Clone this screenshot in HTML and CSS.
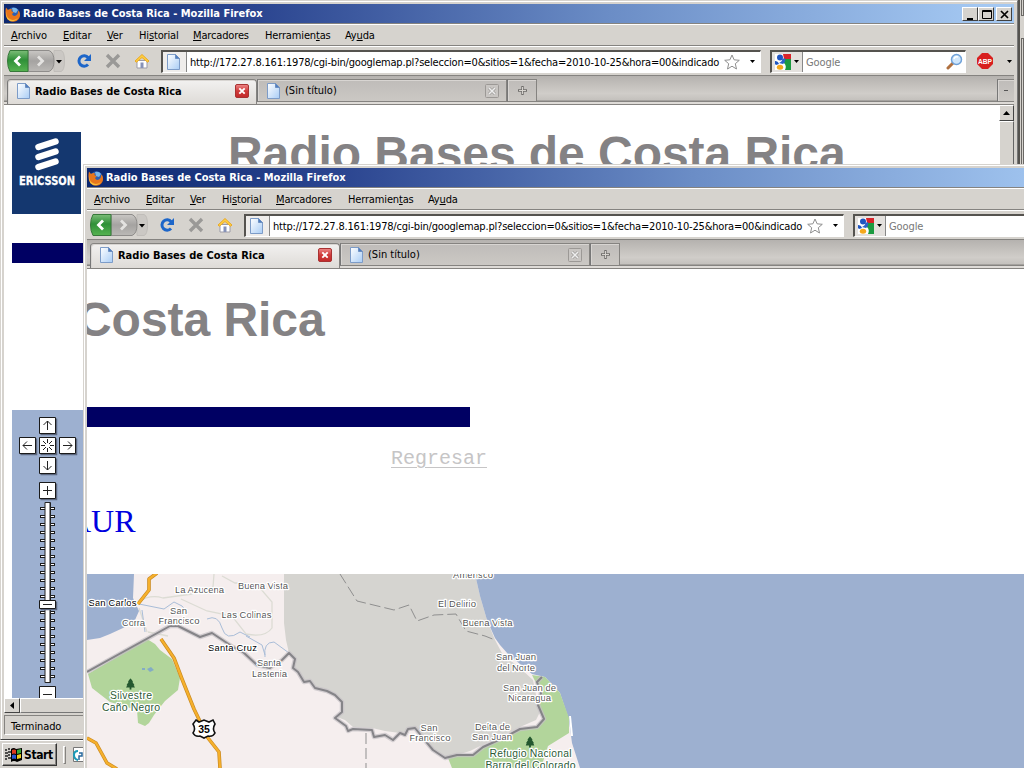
FILE: index.html
```html
<!DOCTYPE html>
<html lang="es">
<head>
<meta charset="utf-8">
<title>Radio Bases de Costa Rica</title>
<link rel="stylesheet" href="styles.css">
</head>
<body>
<svg class="defs" width="0" height="0">
  <defs>
    <linearGradient id="pg" x1="0" y1="0" x2="1" y2="1"><stop offset="0" stop-color="#fff"/><stop offset="1" stop-color="#a9cdf6"/></linearGradient>
    <linearGradient id="gr" x1="0" y1="0" x2="0" y2="1"><stop offset="0" stop-color="#7cbd78"/><stop offset=".45" stop-color="#2f9038"/><stop offset="1" stop-color="#56b350"/></linearGradient>
    <linearGradient id="gy" x1="0" y1="0" x2="0" y2="1"><stop offset="0" stop-color="#c9c7c4"/><stop offset=".5" stop-color="#a5a3a1"/><stop offset="1" stop-color="#bbb9b6"/></linearGradient>
    <linearGradient id="rd" x1="0" y1="0" x2="0" y2="1"><stop offset="0" stop-color="#e88"/><stop offset=".5" stop-color="#cf3a3a"/><stop offset="1" stop-color="#c22a2a"/></linearGradient>
  </defs>
  <symbol id="fox" viewBox="0 0 16 16">
    <circle cx="8.4" cy="7.6" r="6.3" fill="#2c5fb4"/><path d="M7 2q4-1 6 2l-2 3-3-1z" fill="#79b6ea"/>
    <path d="M1 1.5 3 4q2-1.600 4-.8L6.300 5l2.500 1.200L7 8q1 2.600 4 1.600 2.500-1.200 2-5l1.500 1.200Q16.500 12 11.500 15 6 17 2.300 13 -.5 9 1 1.500z" fill="#e8761c"/>
    <path d="M1.500 4Q.5 10 4 12.500q4 3 9-.5-3 4-7.500 3.200Q-.5 13 1.500 4z" fill="#f9bd3a"/>
  </symbol>
  <symbol id="page" viewBox="0 0 13 16"><path d="M.5.5h8l4 4v11H.5z" fill="url(#pg)" stroke="#7d9cc8"/><path d="M8.500.5v4h4z" fill="#4f7fc4" stroke="#6d8fc0"/></symbol>
  <symbol id="nav" viewBox="0 0 60 24">
    <path d="M48 1.500h7q3.500 1 3.500 10.500T55 22.500h-7z" fill="#cbc8c4" stroke="#c0bdb9"/>
    <path d="M22 1.500h21q5 2 5 10.500t-5 10.500H22z" fill="url(#gy)" stroke="#8f8d8b"/>
    <path d="M4 1.500h18v21H4Q1.500 18 1.500 12T4 1.500z" fill="url(#gr)" stroke="#37783a"/>
    <path d="m14 7.500-4.500 4.500 4.500 4.500" fill="none" stroke="#fff" stroke-width="2.800"/>
    <path d="m32 7.500 4.500 4.500-4.500 4.500" fill="none" stroke="#e4e3e1" stroke-width="2.800"/>
    <path d="M50 11h6l-3 3.500z" fill="#000"/>
  </symbol>
  <symbol id="reload" viewBox="0 0 16 16"><path d="M12 11.500a5.200 5.200 0 1 1 .2-6.800" fill="none" stroke="#1d66c9" stroke-width="3"/><path d="M15 1v7H8z" fill="#1d66c9"/></symbol>
  <symbol id="stop" viewBox="0 0 16 16"><path d="m2 2 12 12M14 2 2 14" stroke="#9a9997" stroke-width="3.400"/></symbol>
  <symbol id="home" viewBox="0 0 16 16"><path d="M3 7.500h10V15H3z" fill="#fff" stroke="#9b9ba8"/><path d="M6.500 9.500h3V15h-3z" fill="#8692b8"/><path d="M8 1.500 1 8l1.300 1.300L8 4.500l5.700 4.800L15 8z" fill="#ffcf3d" stroke="#e9a92b"/></symbol>
  <symbol id="star" viewBox="0 0 16 16"><path d="m8 1 2.100 4.800 5.200.5-4 3.400 1.200 5.300L8 12.200 3.500 15l1.200-5.300-4-3.400 5.200-.5z" fill="#fff" stroke="#8f8f8f"/></symbol>
  <symbol id="car" viewBox="0 0 5 3"><path d="M0 0h5L2.500 3z" fill="#000"/></symbol>
  <symbol id="goog" viewBox="0 0 16 16"><path d="M0 0h16v16H0z" fill="#fff"/><path d="M8 0h8v5H9z" fill="#d8232a"/><path d="M9 5h7v11h-6q2-4-1-7z" fill="#1c9a40"/><circle cx="5" cy="3.500" r="3" fill="#1f55c0"/><path d="M0 7q3 0 4 3l-3 1-1-1z" fill="#1f55c0"/><path d="M4 9q4-2 3-4l3-1q1 4-2 6z" fill="#2a62c8"/><ellipse cx="5" cy="13.300" rx="3.200" ry="2.500" fill="#f5a81c"/></symbol>
  <symbol id="lens" viewBox="0 0 17 17"><path d="m2 15 5-5" stroke="#b0703f" stroke-width="3" stroke-linecap="round"/><circle cx="10.500" cy="6.500" r="5" fill="#cfe6fb" stroke="#6fa1d8" stroke-width="1.500"/><path d="M8 6q1-3 4-2" fill="none" stroke="#fff" stroke-width="1.500"/></symbol>
  <symbol id="cls" viewBox="0 0 14 14"><rect x=".5" y=".5" width="13" height="13" rx="1.500" fill="url(#rd)" stroke="#a83232"/><path d="m4.300 4.300 5.400 5.400M9.700 4.300 4.300 9.700" stroke="#fff" stroke-width="1.900"/></symbol>
  <symbol id="clsg" viewBox="0 0 14 14"><rect x=".5" y=".5" width="13" height="13" rx="1" fill="#c9c6c3" stroke="#9c9996"/><path d="m4 4 6 6M10 4l-6 6" stroke="#a09e9b" stroke-width="3"/><path d="m4 4 6 6M10 4l-6 6" stroke="#eee" stroke-width="1.500"/></symbol>
  <symbol id="plus" viewBox="0 0 9 9"><path d="M4.500 0v9M0 4.500h9" stroke="#6f6d6b" stroke-width="2.400"/><path d="M4.500 1v7M1 4.500h7" stroke="#d6d3ce"/></symbol>
  <symbol id="tree" viewBox="0 0 10 13"><path d="M5 0 8 4H7l2.500 4h-1L10 10.500H6V13H4v-2.500H0L1.500 8h-1L3 4H2z" fill="#24582f"/></symbol>
</svg>

<div class="desktop">
  <div class="edge"><i></i><i></i></div>

  <section class="win back">
    <header class="title"><svg class="fox"><use href="#fox"/></svg><b>Radio Bases de Costa Rica - Mozilla Firefox</b>
      <span class="caps">
        <svg width="16" height="14"><path d="M4 10h6v2H4z"/></svg><svg width="16" height="14"><path d="M3.500 2.500h9v8h-9zM3 3.500h10" fill="none" stroke="#000"/></svg><svg class="x" width="16" height="14"><path d="m4 3 7 7m0-7-7 7" stroke="#000" stroke-width="1.700"/></svg>
      </span>
    </header>
    <nav class="menu"><span class="m1"><u>A</u>rchivo</span><span class="m2"><u>E</u>ditar</span><span class="m3"><u>V</u>er</span><span class="m4">Hi<u>s</u>torial</span><span class="m5"><u>M</u>arcadores</span><span class="m6">Herramien<u>t</u>as</span><span class="m7">Ay<u>u</u>da</span></nav>
    <div class="tools">
      <svg class="nav"><use href="#nav"/></svg><svg class="ic reload"><use href="#reload"/></svg><svg class="ic stop"><use href="#stop"/></svg><svg class="ic home"><use href="#home"/></svg>
      <div class="url"><span class="fav"><svg class="page"><use href="#page"/></svg></span><span class="addr">http://172.27.8.161:1978/cgi-bin/googlemap.pl?seleccion=0&amp;sitios=1&amp;fecha=2010-10-25&amp;hora=00&amp;indicado</span><svg class="star"><use href="#star"/></svg><svg class="car"><use href="#car"/></svg></div>
      <div class="search"><span class="eng"><svg class="ic"><use href="#goog"/></svg><svg class="car"><use href="#car"/></svg></span><span class="hint">Google</span><svg class="lens"><use href="#lens"/></svg></div>
      <svg class="abp" viewBox="0 0 16 16"><path d="M5 0h6l5 5v6l-5 5H5l-5-5V5z" fill="#d8201f"/><text x="8" y="10.800" textLength="14" lengthAdjust="spacingAndGlyphs">ABP</text></svg><svg class="car end"><use href="#car"/></svg>
    </div>
    <div class="tabs">
      <div class="tab on"><svg class="page"><use href="#page"/></svg><b>Radio Bases de Costa Rica</b><svg class="cls"><use href="#cls"/></svg></div>
      <div class="tab"><svg class="page"><use href="#page"/></svg><span>(Sin título)</span><svg class="cls"><use href="#clsg"/></svg></div>
      <div class="tab new"><svg><use href="#plus"/></svg></div>
      <div class="tab all"><i></i></div>
    </div>
    <div class="view">
      <div class="doc">
        <div class="masthead">
          <svg class="logo" viewBox="0 0 69 82"><path d="M0 0h69v82H0z" fill="#14376f"/><g stroke="#fff" stroke-width="6.500" stroke-linecap="round"><path d="m26.500 15 17-5.500M26.500 25l17-5.500M26.500 35l17-5.500"/></g><text x="7" y="53" textLength="56" lengthAdjust="spacingAndGlyphs">ERICSSON</text></svg>
          <h1>Radio Bases de Costa Rica</h1>
        </div>
        <div class="bar"></div>
        <svg class="zoomer" viewBox="0 0 90 288">
          <path d="M35.500 97v174" stroke="#1d1d1d" stroke-width="15" stroke-dasharray="3 5"/><path d="M35.500 98v173" stroke="#fff" stroke-width="13" stroke-dasharray="1 7"/>
          <rect x="32.500" y="92" width="6.500" height="181" fill="#222" rx="1"/><rect x="33.500" y="93" width="4" height="179" fill="#fff"/>
          <path d="M28.500 24.500h16v-16M8.500 44.500h16v-16M28.500 44.500h16v-16M48.500 44.500h16v-16M28.500 64.500h16v-16M28.500 89.500h16v-16M28.500 199.500h16v-8" fill="none" stroke="#5d6880" stroke-width="1.500"/>
          <g fill="#fff" stroke="#1a1a1a"><path d="M27.500 7.500h16v16h-16zM7.500 27.500h16v16h-16zM27.500 27.500h16v16h-16zM47.500 27.500h16v16h-16zM27.500 47.500h16v16h-16zM27.500 72.500h16v16h-16zM27.500 190.500h16v8h-16zM27.500 276.500h16v16h-16z"/></g>
          <g fill="none" stroke="#222"><path d="M35.500 20v-9m-4 4 4-4 4 4M20 35.500h-9m4-4-4 4 4 4M51 35.500h9m-4-4 4 4-4 4M35.500 51v9m-4-4 4 4 4-4M35.500 76v9M31 80.500h9M31 194.500h9M31 284.500h9M35.500 29v4M35.500 38v4M29 35.500h4M38 35.500h4M31 31l3 3M40 31l-3 3M31 40l3-3M40 40l-3-3"/></g>
        </svg>
      </div>
      <div class="vscroll"><i><svg width="7" height="4"><path d="M0 4h7L3.500 0z"/></svg></i></div>
    </div>
    <div class="hscroll"><i><svg width="4" height="7"><path d="M4 0v7L0 3.500z"/></svg></i><b></b></div>
    <footer class="status">Terminado</footer>
  </section>

  <div class="taskbar">
    <div class="start"><svg width="18" height="15" viewBox="0 0 18 15"><path d="M0 3h2M0 6h3M0 9h3M0 12h2M3 2h2M3 5h3M3 8h2M3 11h3" stroke="#222" stroke-width="1.500"/><path d="M6 2q3-2 5 0l6-1v12l-5 2q-3-2-6 0z"/><path d="M7 3q2-1 4 0v4Q9 6 7 7z" fill="#e03a20"/><path d="M12 3l4-1v4l-4 1z" fill="#3aa83a"/><path d="M7 8q2-1 4 0v4q-2-1-4 0z" fill="#2b55d0"/><path d="M12 8l4-1v4l-4 1z" fill="#f0cc20"/></svg><b>Start</b></div>
    <i class="grip"></i><svg class="quick" width="13" height="15" viewBox="0 0 13 15"><path d="M1.500.5h11v14h-11z" fill="#fff" stroke="#777"/><path d="M1 8q0-5 5-5v2Q3 5 3 8t3 4v2Q1 13 1 8z" fill="#1b9bb8"/><path d="M7 6h3v3H7v4" fill="none" stroke="#27689c" stroke-width="1.500"/></svg>
  </div>

  <section class="win front">
    <header class="title"><svg class="fox"><use href="#fox"/></svg><b>Radio Bases de Costa Rica - Mozilla Firefox</b></header>
    <nav class="menu"><span class="m1"><u>A</u>rchivo</span><span class="m2"><u>E</u>ditar</span><span class="m3"><u>V</u>er</span><span class="m4">Hi<u>s</u>torial</span><span class="m5"><u>M</u>arcadores</span><span class="m6">Herramien<u>t</u>as</span><span class="m7">Ay<u>u</u>da</span></nav>
    <div class="tools">
      <svg class="nav"><use href="#nav"/></svg><svg class="ic reload"><use href="#reload"/></svg><svg class="ic stop"><use href="#stop"/></svg><svg class="ic home"><use href="#home"/></svg>
      <div class="url"><span class="fav"><svg class="page"><use href="#page"/></svg></span><span class="addr">http://172.27.8.161:1978/cgi-bin/googlemap.pl?seleccion=0&amp;sitios=1&amp;fecha=2010-10-25&amp;hora=00&amp;indicado</span><svg class="star"><use href="#star"/></svg><svg class="car"><use href="#car"/></svg></div>
      <div class="search"><span class="eng"><svg class="ic"><use href="#goog"/></svg><svg class="car"><use href="#car"/></svg></span><span class="hint">Google</span></div>
    </div>
    <div class="tabs">
      <div class="tab on"><svg class="page"><use href="#page"/></svg><b>Radio Bases de Costa Rica</b><svg class="cls"><use href="#cls"/></svg></div>
      <div class="tab"><svg class="page"><use href="#page"/></svg><span>(Sin título)</span><svg class="cls"><use href="#clsg"/></svg></div>
      <div class="tab new"><svg><use href="#plus"/></svg></div>
    </div>
    <div class="view">
      <div class="doc scrolled">
        <h1>Costa Rica</h1>
        <div class="bar"></div>
        <a class="regresar">Regresar</a>
        <div class="tech">AUR</div>
        <svg class="map" viewBox="87 574 937 194">
          <path d="M87 574h937v194H87z" fill="#f5eeee"/>
          <path d="M87 574h47l-1 24 6 13-4 9-12 8-13 6-10 4-13 2z" fill="#9db0d0"/>
          <path d="M284 574H475L480 596 487 620 495 640 503 655 520 668 533 680 537 700 540 712 536 720 520 727 503 735 470 751 457 755 445 758 433 750 423 738 415 728 408 729 405 735 400 733 385 731 372 728 353 727 345 720 337 717 342 712 342 702 335 695 327 691 315 688 310 681 304 682 298 672 293 668 295 659 289 653 286 640 284 623z" fill="#d5d4d0"/>
          <path d="M475 574H1024V768H580L572 743 569 720 560 693 545 677 532 674 520 664 508 654 500 645 495 638 487 620 480 596z" fill="#9db0d0"/>
          <path d="M532 675L545 677 560 693 569 718 569 733 548 746 541 768H452L448 758 457 755 473 755 483 747 503 738 520 729 537 727 544 719 538 705 541 693z" fill="#b2d59b"/>
          <path d="M88 674 147 639 155 644 160 650 172 659 180 678 178 690 165 701 154 715 149 723 145 726 138 723 137 710 110 702 92 688z" fill="#b2d59b"/>
          <path d="M142 668h3v2h-3zM147 669l4-2 3 3-4 2z" fill="#83abc5"/>
          <path d="M570 716l2 20" stroke="#fff" stroke-width="2"/>
          <g fill="none" stroke="#dcdcd4" stroke-width="1.300"><path d="M138 602Q150 594 163 598L192 594 213 587 214 574M181 599 207 611 232 616 246 634Q265 638 272 628V602L260 588 245 583 235 583 222 576M139 608 147 632M168 636 148 632"/></g>
          <g fill="none" stroke="#a9bdd8"><path d="M139 604 164 609 174 602 182 606 188 613M207 619Q218 614 222 628T240 632L250 637M246 636 262 645 265 655M265 657Q263 642 274 642L289 653M142 610 145 632"/></g>
          <g fill="none" stroke-linejoin="round"><path d="M87 672 170 626 178 626 200 637 212 633 233 647 243 652 257 665 270 668 282 660 289 653 295 659 293 668 298 672 304 682 310 681 315 688 327 691 335 695 342 702 342 712 335 718 346 726 348 731 353 729 372 730 374 737 385 735 393 740 400 733 405 735 408 729 415 728 423 738 433 750 445 758 457 755 473 755 483 747 503 738 520 729 537 727 544 719 538 705 541 693 537 682 542 677" stroke="#c4c1c4" stroke-width="4.500" opacity=".7"/><path d="M87 672 170 626 178 626 200 637 212 633 233 647 243 652 257 665 270 668 282 660 289 653 295 659 293 668 298 672 304 682 310 681 315 688 327 691 335 695 342 702 342 712 335 718 346 726 348 731 353 729 372 730 374 737 385 735 393 740 400 733 405 735 408 729 415 728 423 738 433 750 445 758 457 755 473 755 483 747 503 738 520 729 537 727 544 719 538 705 541 693 537 682 542 677" stroke="#858488" stroke-width="2"/></g>
          <path d="M340 574 357 601 394 610 409 605 417 621 434 615 456 614 466 631 485 636 495 640M366 733v35" fill="none" stroke="#8f8f8f" stroke-dasharray="11 4"/>
          <g fill="none" stroke-linejoin="round"><g stroke="#c98a23" stroke-width="3.600"><path d="M138 604 149 590V579L157 573M161 639 174 658 182 679 194 709 208 738 219 752 220 768M87 738 96 743 107 763 117 769"/></g><g stroke="#f6b02c" stroke-width="2.200"><path d="M138 604 149 590V579L157 573M161 639 174 658 182 679 194 709 208 738 219 752 220 768M87 738 96 743 107 763 117 769"/></g></g>
          <path d="M196 720l3 2 5-2 5 2 4-2 2 4q-3 5 0 9-2 4-7 3l-4 2-4-2q-5 1-7-3 3-4 0-9z" fill="#fff" stroke="#111" stroke-width="1.600"/><text class="route" x="204" y="732.500">35</text>
          <svg x="126" y="678" width="9" height="12" viewBox="0 0 10 13"><use href="#tree"/></svg><svg x="525.500" y="736" width="9" height="12" viewBox="0 0 10 13"><use href="#tree"/></svg>
          <g class="small">
            <text x="199.500" y="592.500" textLength="49">La Azucena</text><text x="263" y="588.500" textLength="50">Buena Vista</text><text x="246.500" y="617.500" textLength="50">Las Colinas</text><text x="178.500" y="613.500" textLength="17">San</text><text x="179" y="624" textLength="41">Francisco</text><text x="133.500" y="625.500" textLength="23">Corra</text><text x="269" y="666" textLength="24">Santa</text><text x="269.500" y="676.500" textLength="35">Lastenia</text><text x="473" y="577.500" textLength="40">Amerisco</text><text x="457" y="606.500" textLength="38">El Delirio</text><text x="487.500" y="625.500" textLength="50">Buena Vista</text><text x="516" y="659.500" textLength="40">San Juan</text><text x="516" y="670.500" textLength="38">del Norte</text><text x="529.500" y="690.500" textLength="53">San Juan de</text><text x="529.500" y="700.500" textLength="43">Nicaragua</text><text x="429" y="730.500" textLength="17">San</text><text x="430" y="740.500" textLength="41">Francisco</text><text x="492.500" y="729.500" textLength="35">Delta de</text><text x="492" y="739.500" textLength="40">San Juan</text>
          </g>
          <g class="small city"><text x="112.500" y="605.500" textLength="48">San Carlos</text><text x="232.500" y="650.500" textLength="49">Santa Cruz</text></g>
          <g class="small park"><text x="131" y="698.500" textLength="42">Silvestre</text><text x="131" y="710.500" textLength="58">Caño Negro</text><text x="530.500" y="756.500" textLength="82">Refugio Nacional</text><text x="530.500" y="768.500" textLength="90">Barra del Colorado</text></g>
        </svg>
      </div>
    </div>
  </section>
</div>
</body>
</html>
```
FILE: styles.css
```css
* { box-sizing: border-box; }
body { margin: 0; background: #d6d3ce; font-family: "DejaVu Sans Condensed", "DejaVu Sans", sans-serif; font-size: 11px; color: #000; }
svg { display: block; flex: none; }
.defs { position: absolute; }
.desktop { position: relative; width: 1024px; height: 768px; overflow: hidden; background: #d6d3ce; white-space: nowrap; }
.edge { position: absolute; right: 0; top: 0; width: 6px; height: 170px; background: #d6d3ce; border-left: 2px solid #55534f; }
.edge i { display: block; margin-left: 1px; width: 3px; height: 16px; border: 1px solid #6a6865; border-top: 0; }
.edge i + i { margin-top: 22px; height: 132px; border-top: 1px solid #6a6865; }

/* window frame and its rows */
.win { position: absolute; width: 1018px; background: #d6d3ce; padding: 3px; border: 1px solid #d6d3ce; box-shadow: inset 1px 1px #fff; display: flex; flex-direction: column; }
.back { left: 0; top: 0; height: 740px; border-bottom-color: #444; border-right-color: #777; }
.front { left: 83px; top: 164px; height: 900px; }
.title { height: 19px; flex: none; display: flex; align-items: center; color: #fff; background: linear-gradient(90deg, #0c2870, #2b4590 25%, #6b8dc6 60%, #a4c8f2 97%); padding-left: 1px; }
.title b { margin-left: 2px; letter-spacing: 0; }
.fox { width: 16px; height: 16px; }
.caps { margin-left: auto; display: flex; padding-right: 2px; }
.caps svg { background: #d6d3ce; border: 1px solid; border-color: #fff #404040 #404040 #fff; }
.caps .x { margin-left: 2px; }
.menu { height: 23px; flex: none; display: flex; align-items: center; border-top: 1px solid #858380; border-bottom: 1px solid #858380; box-shadow: inset 0 1px #fff; padding: 2px 0 0 7px; letter-spacing: -.15px; }
.menu u { text-underline-offset: 1px; }
.menu span { flex: none; }
.m1 { width: 52px; } .m2 { width: 44px; } .m3 { width: 32px; } .m4 { width: 54px; } .m5 { width: 72px; } .m6 { width: 80px; }
.tools { height: 30px; flex: none; display: flex; align-items: center; border-top: 1px solid #fff; border-bottom: 1px solid #858380; padding-left: 2px; }
.nav { width: 60px; height: 24px; }
.ic { width: 16px; height: 16px; }
.reload { margin-left: 10px; } .stop { margin-left: 13px; } .home { margin-left: 13px; }
.car { width: 5px; height: 3px; }
.url, .search { height: 23px; border: 2px solid; border-color: #55534f #fff #fff #55534f; border-right-width: 1px; border-bottom-width: 1px; background: #fff; display: flex; align-items: center; }
.url { width: 600px; margin-left: 11px; }
.fav { width: 24px; height: 100%; background: #efedeb; border-right: 1px solid #888; display: flex; align-items: center; padding-left: 4px; }
.page { width: 13px; height: 16px; }
.addr { width: 535px; padding: 1px 0 0 3px; letter-spacing: -.19px; overflow: hidden; }
.star { width: 16px; height: 16px; margin-left: 2px; }
.url .car { margin-left: 10px; }
.search { width: 196px; margin-left: 9px; }
.eng { width: 31px; height: 100%; background: #e4e1de; border-right: 1px solid #888; display: flex; align-items: center; padding-left: 3px; }
.eng .car { margin-left: 3px; }
.hint { color: #777; margin-left: 3px; padding-top: 1px; letter-spacing: -.1px; }
.lens { width: 17px; height: 17px; margin-left: auto; margin-right: 2px; }
.abp { width: 16px; height: 16px; margin-left: 11px; }
.abp text { font: bold 7.500px "Liberation Sans", sans-serif; fill: #fff; text-anchor: middle; }
.end { margin-left: 14px; }
.tabs { height: 29px; flex: none; display: flex; padding: 3px 0 0 3px; background: linear-gradient(#b5b2af, #d0cdc9 60%, #c4c1bd 24px, #858380 25px, #858380 26px, #dedbd7 26px, #dedbd7 28px, #858380 28px); }
.tab { width: 250px; height: 23px; border: 1px solid #858380; border-left-color: #777; background: linear-gradient(#bfbcb9, #cbc8c4); display: flex; align-items: center; padding: 0 7px 0 9px; box-shadow: inset 1px 1px #d8d5d2; }
.tab.on { height: 25px; border-radius: 4px 4px 0 0; border-bottom: 0; background: linear-gradient(#f2f1f0, #dedbd7); padding-bottom: 2px; }
.tab .page { margin-right: 5px; }
.tab b { letter-spacing: 0; }
.cls { width: 14px; height: 14px; margin-left: auto; }
.new { width: 30px; padding: 0 10px; } .new svg { width: 9px; height: 9px; }
.all { width: 17px; margin-left: auto; padding: 0 6px; border-right: 0; }
.all i { width: 5px; height: 1px; background: #555; }
.view { flex: 1; min-height: 0; display: flex; background: #fff; overflow: hidden; }

/* page in the back window */
.doc { flex: 1; min-width: 0; padding: 27px 0 0 8px; overflow: hidden; }
h1 { font: bold 48px/56px "Liberation Sans", sans-serif; color: #848284; margin: 0; letter-spacing: -.05px; }
.masthead { display: flex; }
.logo { width: 69px; height: 82px; }
.logo text { font: bold 12px "DejaVu Sans", sans-serif; fill: #fff; stroke: #fff; stroke-width: .3px; }
.masthead h1 { margin: -6px 0 0 147px; }
.bar { height: 20px; margin-top: 29px; background: #000063; }
.zoomer { width: 90px; height: 288px; margin-top: 147px; background: #9db0d0; }
.vscroll { width: 15px; background: #eceae7; }
.vscroll i { display: flex; align-items: center; justify-content: center; height: 16px; background: #d6d3ce; border: 1px solid; border-color: #fff #444 #444 #fff; }
.vscroll::after { content: ""; display: block; height: 500px; background: #d6d3ce; border: 1px solid; border-color: #fff #666 #666 #fff; }
.hscroll { height: 15px; flex: none; display: flex; }
.hscroll i { width: 16px; display: flex; align-items: center; justify-content: center; border: 1px solid; border-color: #fff #444 #444 #fff; }
.hscroll b { flex: 1; border: 1px solid; border-color: #fff #444 #777 #fff; }
.status { height: 20px; flex: none; margin: 2px 0 1px; padding: 4px 6px; border: 1px solid; border-color: #858380 #fff #fff #858380; letter-spacing: -.1px; }

/* page in the front window, scrolled to the right */
.scrolled { padding: 23px 0 0; display: flex; flex-direction: column; align-items: flex-start; }
.scrolled h1 { margin-left: -10px; }
.scrolled .bar { width: 383px; margin-top: 59px; flex: none; }
.regresar { margin: 20px 0 0 304px; font: 20px/24px "Liberation Mono", monospace; color: #c6c5c6; text-decoration: underline; text-decoration-thickness: 1px; text-underline-offset: 3px; }
.tech { margin: 30px 0 0 -19px; font: 32px/40px "Liberation Serif", serif; color: #0000e0; }
.map { width: 937px; height: 194px; margin-top: 33px; }
.small text { font: 9.500px "Liberation Sans", sans-serif; fill: #555; text-anchor: middle; stroke: #fff; stroke-width: 2.500px; paint-order: stroke; stroke-linejoin: round; }
.small.city text { fill: #000; }
.small.park text { font-size: 10.500px; fill: #2c5a36; }
.route { font: bold 10.500px "Liberation Sans", sans-serif; text-anchor: middle; }

/* taskbar */
.taskbar { position: absolute; left: 0; top: 740px; width: 100%; height: 28px; border-top: 1px solid #fff; background: #d6d3ce; display: flex; align-items: center; padding-left: 2px; }
.start { width: 55px; height: 23px; display: flex; align-items: center; gap: 1px; padding-left: 2px; border: 1px solid; border-color: #fff #333 #333 #fff; box-shadow: inset -1px -1px #858380; }
.start b { font-size: 12px; letter-spacing: -.4px; }
.grip { width: 3px; height: 18px; margin-left: 6px; border: 1px solid; border-color: #fff #858380 #858380 #fff; }
.quick { margin-left: 6px; }
```
